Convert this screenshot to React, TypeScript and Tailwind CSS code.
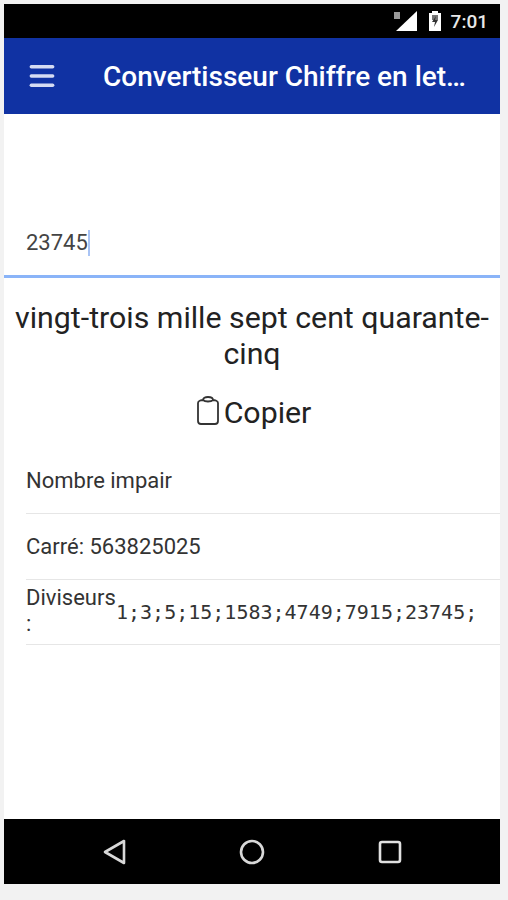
import { Menu } from 'lucide-react';

function StatusBar() {
    return (
        <div className="flex h-[34px] items-center justify-end bg-black pr-[12px] text-white">
            <svg width="26" height="22" viewBox="0 0 26 22" className="mr-[9px]">
                <path d="M24 1V21H3Z" fill="#fff" />
                <rect x="1" y="2" width="6" height="7" fill="#9a9a9a" />
            </svg>
            <svg width="14" height="22" viewBox="0 0 14 22" className="mr-[9px]">
                <path d="M4 1h6v2h3v18H1V3h3Z" fill="#fff" />
                <path d="M4 5h6v5H4Z" fill="#777" />
                <path d="M8 6 4 12h3l-1 5 4-7H7Z" fill="#333" />
            </svg>
            <span className="font-['Roboto',sans-serif] text-[19px] font-medium leading-none text-[#e8e8e8]">7:01</span>
        </div>
    );
}

function AppBar() {
    return (
        <div className="flex h-[76px] items-center bg-[#1032a3] text-white">
            <Menu className="ml-[22px] h-[32px] w-[32px] text-[#d5dcf3]" strokeWidth={2.6} absoluteStrokeWidth />
            <span className="ml-[45px] mt-[2px] w-[363px] truncate font-['Roboto',sans-serif] text-[28px] font-medium leading-[34px]">
                Convertisseur Chiffre en lettres
            </span>
        </div>
    );
}

function Row({ children }: { children: React.ReactNode }) {
    return <div className="ml-[22px] flex h-[65.5px] items-center border-b border-[#e6e6e6] font-['Roboto',sans-serif] text-[22px] text-[#333]">{children}</div>;
}

function NavBar() {
    return (
        <div className="flex h-[65px] items-center bg-black">
            <svg width="24" height="28" viewBox="0 0 24 28" className="ml-[98px]">
                <path d="M22 3V25L3 14Z" fill="none" stroke="#d8d8d8" strokeWidth="2.6" strokeLinejoin="round" />
            </svg>
            <svg width="26" height="26" viewBox="0 0 26 26" className="ml-[113px]">
                <circle cx="13" cy="13" r="11" fill="none" stroke="#d8d8d8" strokeWidth="2.6" />
            </svg>
            <svg width="24" height="24" viewBox="0 0 24 24" className="ml-[113px]">
                <rect x="2" y="2" width="20" height="20" rx="2" fill="none" stroke="#e0e0e0" strokeWidth="2.6" />
            </svg>
        </div>
    );
}

export default function App() {
    return (
        <div className="h-[900px] w-[508px] bg-[#f2f2f2] pb-[16px] pl-[4px] pr-[8px] pt-[4px]">
            <div className="flex h-full flex-col">
                <StatusBar />
                <AppBar />
                <div className="flex-1 bg-white">
                    <div className="flex h-[164px] items-end border-b-[3px] border-[#8ab4f8] pb-[19px] pl-[22px]">
                        <span className="border-r-2 border-[#a9c4f5] font-['Roboto',sans-serif] text-[22px] leading-[26px] text-[#444]">23745</span>
                    </div>
                    <div className="mt-[22px] px-[4px] text-center font-['Roboto',sans-serif] text-[30.3px] leading-[36px] text-[#222]">
                        vingt-trois mille sept cent quarante-cinq
                    </div>
                    <div className="mt-[16px] flex h-[50px] items-center justify-center pl-[4px] font-['Roboto',sans-serif] text-[30.3px] text-[#222]">
                        <svg width="22" height="29" viewBox="0 0 22 29" className="mb-[6px] mr-[5px]">
                            <path d="M6 4C6 2 8 1 11 1s5 1 5 3c2 0 5 1 5 3v18c0 2-1 3-3 3H4c-2 0-3-1-3-3V7c0-2 3-3 5-3Zm0 0c2 2 8 2 10 0" fill="none" stroke="#333" strokeWidth="1.8" />
                        </svg>
                        Copier
                    </div>
                    <div className="mt-[10.5px]">
                        <Row>Nombre impair</Row>
                        <Row>Carré: 563825025</Row>
                        <Row>
                            <span className="mb-[2px] w-[90px] shrink-0 leading-[26px]">Diviseurs :</span>
                            <span className="font-['DejaVu_Sans_Mono',monospace] text-[20px] leading-none">1;3;5;15;1583;4749;7915;23745;</span>
                        </Row>
                    </div>
                </div>
                <NavBar />
            </div>
        </div>
    );
}
